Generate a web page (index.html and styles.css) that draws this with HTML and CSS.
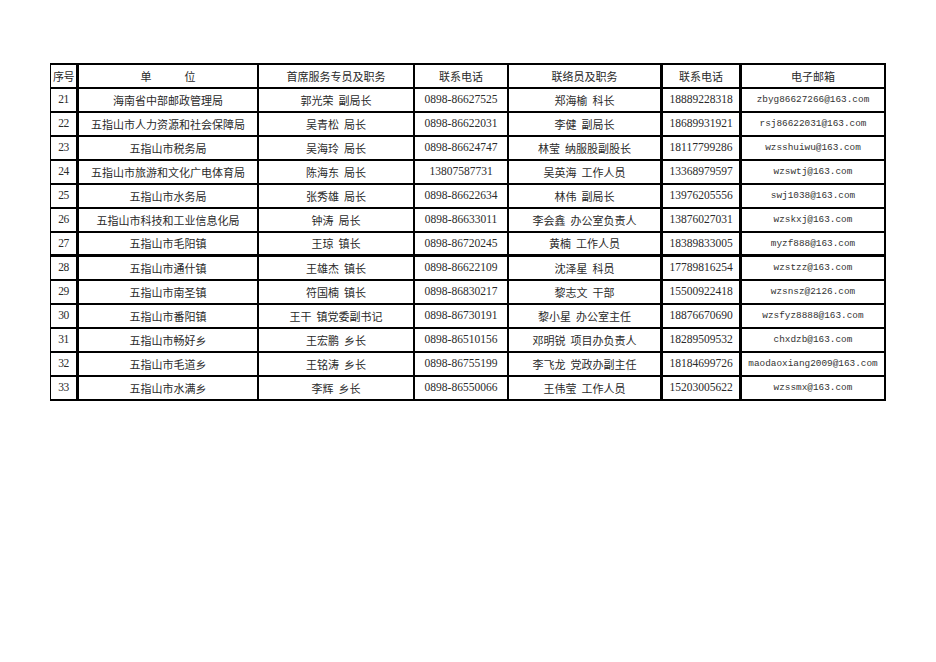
FILE: index.html
```html
<!DOCTYPE html>
<html lang="zh-CN">
<head>
<meta charset="utf-8">
<title>联系表</title>
<link rel="stylesheet" href="styles.css">
</head>
<body>
<div class="sheet">
  <div class="grid">
    <div class="c h">序号</div><div class="c h">单　　　位</div><div class="c h">首席服务专员及职务</div><div class="c h">联系电话</div><div class="c h">联络员及职务</div><div class="c h">联系电话</div><div class="c h">电子邮箱</div>

    <div class="c n">21</div><div class="c">海南省中部邮政管理局</div><div class="c">郭光荣&nbsp;&nbsp;副局长</div><div class="c n">0898-86627525</div><div class="c">郑海榆&nbsp;&nbsp;科长</div><div class="c n">18889228318</div><div class="c m">zbyg86627266@163.com</div>
    <div class="c n">22</div><div class="c">五指山市人力资源和社会保障局</div><div class="c">吴青松&nbsp;&nbsp;局长</div><div class="c n">0898-86622031</div><div class="c">李健&nbsp;&nbsp;副局长</div><div class="c n">18689931921</div><div class="c m">rsj86622031@163.com</div>
    <div class="c n">23</div><div class="c">五指山市税务局</div><div class="c">吴海玲&nbsp;&nbsp;局长</div><div class="c n">0898-86624747</div><div class="c">林莹&nbsp;&nbsp;纳服股副股长</div><div class="c n">18117799286</div><div class="c m">wzsshuiwu@163.com</div>
    <div class="c n">24</div><div class="c">五指山市旅游和文化广电体育局</div><div class="c">陈海东&nbsp;&nbsp;局长</div><div class="c n">13807587731</div><div class="c">吴英海&nbsp;&nbsp;工作人员</div><div class="c n">13368979597</div><div class="c m">wzswtj@163.com</div>
    <div class="c n">25</div><div class="c">五指山市水务局</div><div class="c">张秀雄&nbsp;&nbsp;局长</div><div class="c n">0898-86622634</div><div class="c">林伟&nbsp;&nbsp;副局长</div><div class="c n">13976205556</div><div class="c m">swj1038@163.com</div>
    <div class="c n">26</div><div class="c">五指山市科技和工业信息化局</div><div class="c">钟涛&nbsp;&nbsp;局长</div><div class="c n">0898-86633011</div><div class="c">李会鑫&nbsp;&nbsp;办公室负责人</div><div class="c n">13876027031</div><div class="c m">wzskxj@163.com</div>
    <div class="c n t">27</div><div class="c t">五指山市毛阳镇</div><div class="c t">王琼&nbsp;&nbsp;镇长</div><div class="c n t">0898-86720245</div><div class="c t">黄楠&nbsp;&nbsp;工作人员</div><div class="c n t">18389833005</div><div class="c m t">myzf888@163.com</div>
    <div class="c n">28</div><div class="c">五指山市通什镇</div><div class="c">王雄杰&nbsp;&nbsp;镇长</div><div class="c n">0898-86622109</div><div class="c">沈泽星&nbsp;&nbsp;科员</div><div class="c n">17789816254</div><div class="c m">wzstzz@163.com</div>
    <div class="c n">29</div><div class="c">五指山市南圣镇</div><div class="c">符国楠&nbsp;&nbsp;镇长</div><div class="c n">0898-86830217</div><div class="c">黎志文&nbsp;&nbsp;干部</div><div class="c n">15500922418</div><div class="c m">wzsnsz@2126.com</div>
    <div class="c n">30</div><div class="c">五指山市番阳镇</div><div class="c">王干&nbsp;&nbsp;镇党委副书记</div><div class="c n">0898-86730191</div><div class="c">黎小星&nbsp;&nbsp;办公室主任</div><div class="c n">18876670690</div><div class="c m">wzsfyz8888@163.com</div>
    <div class="c n">31</div><div class="c">五指山市畅好乡</div><div class="c">王宏鹏&nbsp;&nbsp;乡长</div><div class="c n">0898-86510156</div><div class="c">邓明锐&nbsp;&nbsp;项目办负责人</div><div class="c n">18289509532</div><div class="c m">chxdzb@163.com</div>
    <div class="c n">32</div><div class="c">五指山市毛道乡</div><div class="c">王铭涛&nbsp;&nbsp;乡长</div><div class="c n">0898-86755199</div><div class="c">李飞龙&nbsp;&nbsp;党政办副主任</div><div class="c n">18184699726</div><div class="c m">maodaoxiang2009@163.com</div>
    <div class="c n">33</div><div class="c">五指山市水满乡</div><div class="c">李辉&nbsp;&nbsp;乡长</div><div class="c n">0898-86550066</div><div class="c">王伟莹&nbsp;&nbsp;工作人员</div><div class="c n">15203005622</div><div class="c m">wzssmx@163.com</div>
  </div>
</div>
</body>
</html>
```
FILE: styles.css
```css
html, body {
  margin: 0;
  padding: 0;
  background: #fff;
}
.sheet {
  padding: 63px 0 0 50px;
}
.grid {
  display: grid;
  grid-template-columns: 28px 180px 156px 94px 154px 79px 144px;
  grid-auto-rows: 24px;
  width: max-content;
  border-top: 2px solid #000;
  border-left: 1px solid #000;
  font-family: "Noto Sans CJK SC", sans-serif;
  font-size: 11px;
  color: #2a2a2a;
}
.c {
  box-sizing: border-box;
  display: flex;
  align-items: center;
  justify-content: center;
  white-space: nowrap;
  overflow: hidden;
  border-right: 2px solid #000;
  border-bottom: 2px solid #000;
  line-height: 1;
}
.c:nth-child(7n+1),
.c:nth-child(7n+5),
.c:nth-child(7n+6) {
  border-right-width: 3px;
}
.c:nth-child(7n+1) {
  letter-spacing: -0.5px;
}
.n {
  font-family: "Liberation Serif", serif;
  font-size: 11.5px;
  letter-spacing: 0;
}
.m {
  font-family: "Liberation Mono", monospace;
  font-size: 9.4px;
  color: #333;
}
.t {
  border-bottom-width: 3px;
}
```
